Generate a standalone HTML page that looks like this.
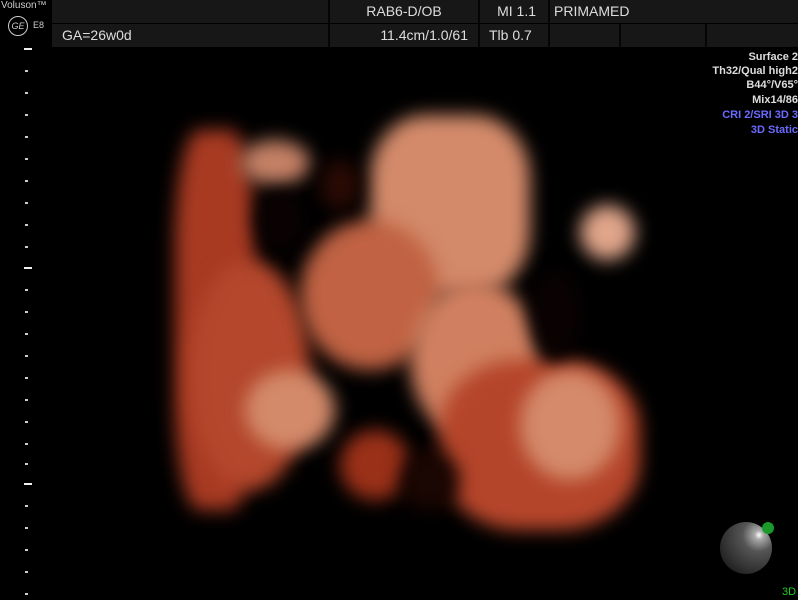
<!DOCTYPE html>
<html><head><style>
body{margin:0;width:798px;height:600px;background:#000;overflow:hidden;position:relative;font-family:"Liberation Sans","DejaVu Sans",sans-serif;}
.c{position:absolute;background:#171717;color:#ddd;font-size:14px;line-height:22px;box-sizing:border-box;border-right:2px solid #050505;}
.r{position:absolute;right:0;text-align:right;font-weight:bold;font-size:11px;line-height:14px;color:#ddd;}
.b{position:absolute;border-radius:50%;filter:blur(9px);}
.t{position:absolute;left:25px;width:3px;height:2px;background:#ccc;}
</style></head><body>
<div style="position:absolute;left:0;top:0;width:52px;height:46px;background:#000"></div>
<div style="position:absolute;left:1px;top:0;color:#ccc;font-size:10px">Voluson™</div>
<div style="position:absolute;left:8px;top:16px;width:18px;height:18px;border:1.5px solid #ccc;border-radius:50%;color:#ccc;font-size:9px;text-align:center;line-height:18px;font-style:italic">GE</div>
<div style="position:absolute;left:33px;top:20px;color:#ccc;font-size:9px">E8</div>
<div class="c" style="left:52px;top:0;width:278px;height:23px"></div>
<div class="c" style="left:330px;top:0;width:150px;height:23px;text-align:center">RAB6-D/OB</div>
<div class="c" style="left:480px;top:0;width:70px;height:23px;text-align:right;padding-right:12px">MI 1.1</div>
<div class="c" style="left:550px;top:0;width:248px;height:23px;padding-left:4px;border:none">PRIMAMED</div>
<div class="c" style="left:52px;top:24px;width:278px;height:23px;padding-left:10px">GA=26w0d</div>
<div class="c" style="left:330px;top:24px;width:150px;height:23px;text-align:right;padding-right:10px">11.4cm/1.0/61</div>
<div class="c" style="left:480px;top:24px;width:70px;height:23px;padding-left:9px">Tlb 0.7</div>
<div class="c" style="left:550px;top:24px;width:71px;height:23px"></div>
<div class="c" style="left:621px;top:24px;width:86px;height:23px"></div>
<div class="c" style="left:707px;top:24px;width:91px;height:23px;border:none"></div>
<div class="r" style="top:50px">Surface 2</div>
<div class="r" style="top:64px">Th32/Qual high2</div>
<div class="r" style="top:78px">B44°/V65°</div>
<div class="r" style="top:93px">Mix14/86</div>
<div class="r" style="top:108px;color:#6a6aff">CRI 2/SRI 3D 3</div>
<div class="r" style="top:123px;color:#6a6aff">3D Static</div>
<div style="position:absolute;left:24px;top:48px;width:8px;height:2px;background:#eee"></div>
<div style="position:absolute;left:24px;top:267px;width:8px;height:2px;background:#eee"></div>
<div style="position:absolute;left:24px;top:483px;width:8px;height:2px;background:#eee"></div>
<div class="t" style="top:70px"></div><div class="t" style="top:92px"></div><div class="t" style="top:114px"></div><div class="t" style="top:136px"></div><div class="t" style="top:158px"></div><div class="t" style="top:180px"></div><div class="t" style="top:202px"></div><div class="t" style="top:224px"></div><div class="t" style="top:246px"></div><div class="t" style="top:289px"></div><div class="t" style="top:311px"></div><div class="t" style="top:333px"></div><div class="t" style="top:355px"></div><div class="t" style="top:377px"></div><div class="t" style="top:399px"></div><div class="t" style="top:421px"></div><div class="t" style="top:443px"></div><div class="t" style="top:463px"></div><div class="t" style="top:505px"></div><div class="t" style="top:527px"></div><div class="t" style="top:549px"></div><div class="t" style="top:571px"></div><div class="t" style="top:593px"></div>
<!-- volume -->
<div class="b" style="left:175px;top:130px;width:80px;height:380px;background:#a83a22;border-radius:30%"></div>
<div class="b" style="left:190px;top:260px;width:120px;height:230px;background:#b4472c"></div>
<div class="b" style="left:370px;top:115px;width:160px;height:180px;background:#d38a6a;border-radius:35%"></div>
<div class="b" style="left:300px;top:220px;width:140px;height:150px;background:#c06243"></div>
<div class="b" style="left:410px;top:280px;width:130px;height:160px;background:#d08060"></div>
<div class="b" style="left:440px;top:360px;width:200px;height:170px;background:#b5452a;border-radius:40%"></div>
<div class="b" style="left:520px;top:370px;width:100px;height:110px;background:#d48a6b"></div>
<div class="b" style="left:580px;top:205px;width:55px;height:55px;background:#e0a58a"></div>
<div class="b" style="left:240px;top:140px;width:70px;height:45px;background:#c48065"></div>
<div class="b" style="left:245px;top:370px;width:90px;height:80px;background:#d38a6a"></div>
<div class="b" style="left:340px;top:430px;width:70px;height:70px;background:#9a3018"></div>
<div class="b" style="left:255px;top:190px;width:50px;height:60px;background:#0a0202"></div>
<div class="b" style="left:320px;top:160px;width:40px;height:50px;background:#2a0a04"></div>
<div class="b" style="left:530px;top:270px;width:50px;height:90px;background:#0a0202"></div>
<div class="b" style="left:400px;top:450px;width:60px;height:60px;background:#1a0602"></div>
<div style="position:absolute;left:720px;top:522px;width:52px;height:52px;border-radius:50%;background:radial-gradient(circle at 75% 25%,#fff 0,#aaa 8%,#555 30%,#222 80%)"></div>
<div style="position:absolute;left:762px;top:522px;width:12px;height:12px;border-radius:50%;background:#1a9a2a"></div>
<div style="position:absolute;left:782px;top:586px;color:#2c2;font-size:11px">3D</div>
</body></html>
